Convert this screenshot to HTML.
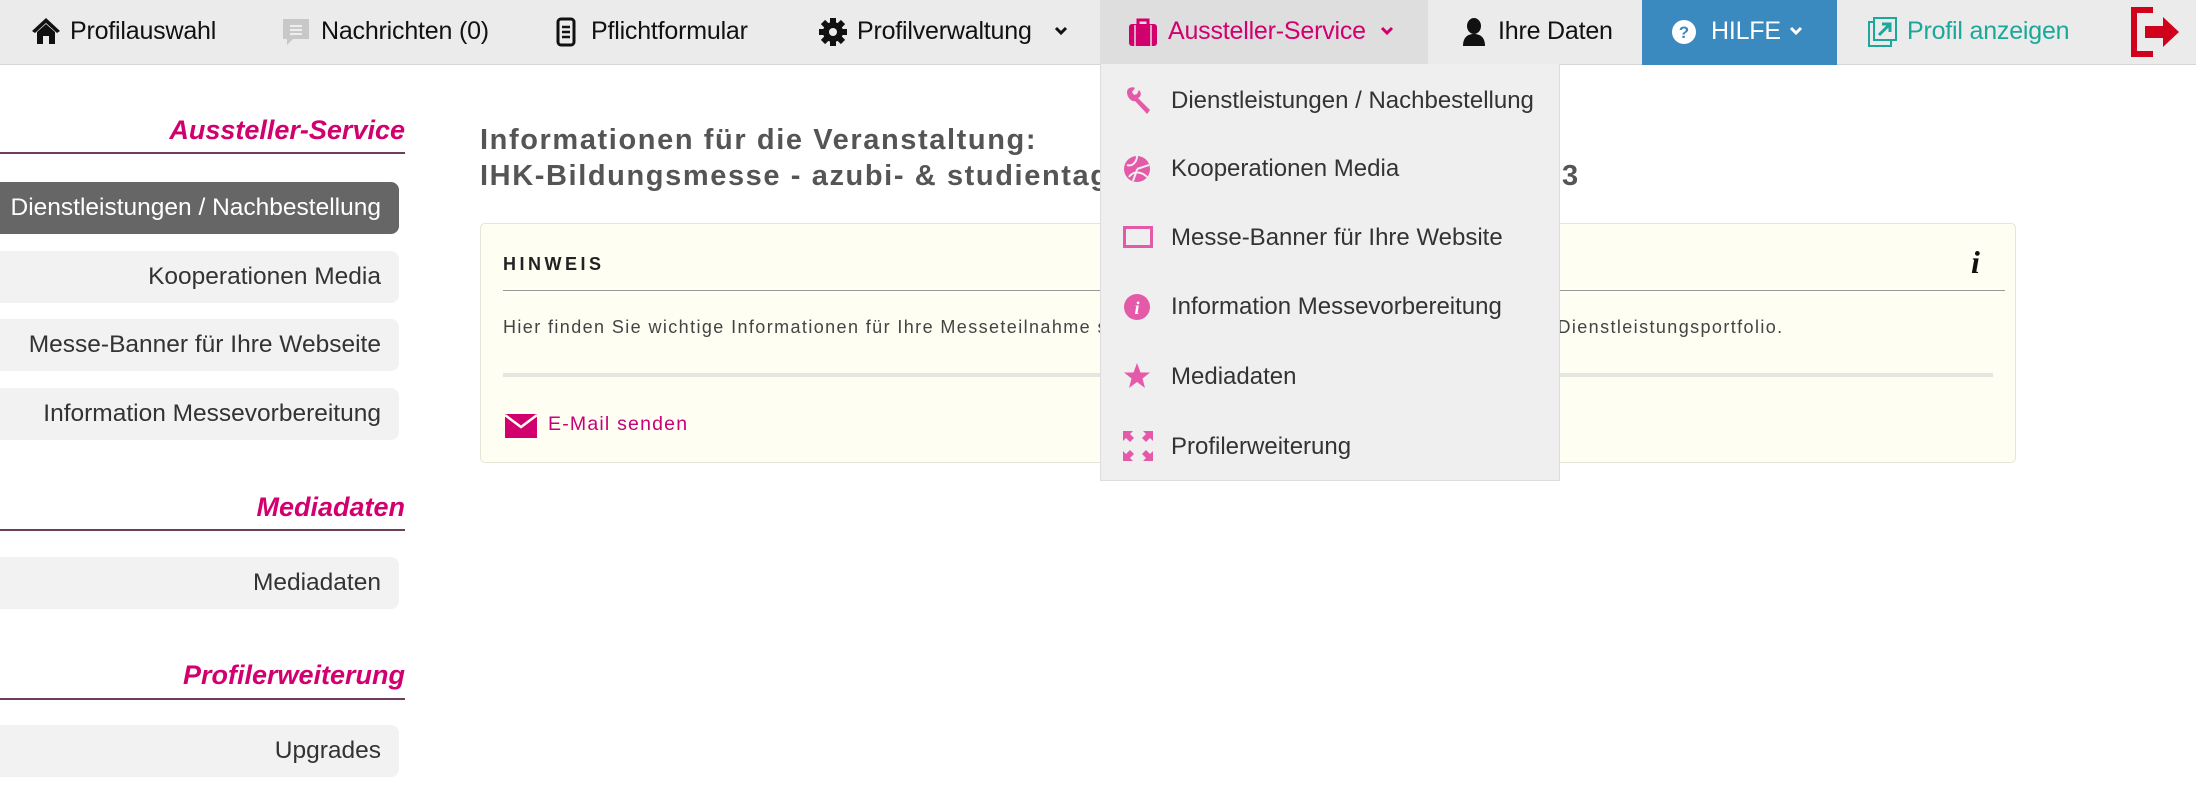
<!DOCTYPE html>
<html><head><meta charset="utf-8"><style>
*{margin:0;padding:0;box-sizing:border-box}
body{width:2196px;height:812px;overflow:hidden;background:#fff;font-family:"Liberation Sans",sans-serif;position:relative;color:#222}
.a{position:absolute;white-space:nowrap}
.nav{position:absolute;left:0;top:0;width:2196px;height:65px;background:#ebebeb;border-bottom:1px solid #d6d6d6}
.nt{position:absolute;top:16px;font-size:25px;line-height:30px;color:#111;letter-spacing:-0.2px}
.sh{position:absolute;right:1791px;font-size:27px;font-weight:bold;font-style:italic;color:#d1006e;line-height:32px}
.sl{position:absolute;left:0;width:405px;height:2px;background:#6e3c5c}
.sb{position:absolute;left:0;width:399px;height:52px;background:#f2f2f2;border-radius:0 8px 8px 0;text-align:right;padding-right:18px;font-size:24.5px;line-height:52px;color:#333}
.dd{position:absolute;left:1100px;top:64px;width:460px;height:417px;background:#efefef;border:1px solid #ddd;border-top:none}
.di{position:absolute;left:70px;font-size:24px;color:#333;line-height:30px}
.ic{position:absolute;left:22px}
</style></head><body>
<div class="nav">
 <div class="a" style="left:1100px;top:0;width:328px;height:65px;background:#dedede"></div>
 <div class="a" style="left:1642px;top:0;width:195px;height:65px;background:#3a89bf"></div>
 <svg class="a" style="left:31px;top:17px" width="30" height="28" viewBox="0 0 30 28"><path d="M15 1 L1 14 L4 16 L15 6 L26 16 L29 14Z M6 15 L15 7 L24 15 V27 H18 V19 H12 V27 H6Z" fill="#111"/></svg>
 <div class="nt" style="left:70px">Profilauswahl</div>
 <svg class="a" style="left:281px;top:17px" width="30" height="30" viewBox="0 0 30 30"><path d="M2 2 H28 V22 H12 L6 28 V22 H2Z" fill="#c8c8c8"/><path d="M9 9 H21 M9 13 H21 M9 17 H21" stroke="#eee" stroke-width="2"/></svg>
 <div class="nt" style="left:321px">Nachrichten (0)</div>
 <svg class="a" style="left:556px;top:17px" width="20" height="30" viewBox="0 0 20 30"><rect x="2" y="2" width="16" height="26" rx="3" fill="none" stroke="#111" stroke-width="3"/><path d="M6 10 H14 M6 15 H14 M6 20 H14" stroke="#111" stroke-width="2.5"/></svg>
 <div class="nt" style="left:591px">Pflichtformular</div>
 <svg class="a" style="left:818px;top:17px" width="30" height="30" viewBox="0 0 30 30"><circle cx="15" cy="15" r="10" fill="#111"/><g stroke="#111" stroke-width="6"><path d="M15 1 V29 M1 15 H29 M5 5 L25 25 M25 5 L5 25"/></g><circle cx="15" cy="15" r="4" fill="#ebebeb"/></svg>
 <div class="nt" style="left:857px">Profilverwaltung</div>
 <svg class="a" style="left:1054px;top:26px" width="14" height="10" viewBox="0 0 14 10"><path d="M2 2 L7 7 L12 2" fill="none" stroke="#111" stroke-width="3"/></svg>
 <svg class="a" style="left:1128px;top:17px" width="30" height="30" viewBox="0 0 30 30"><rect x="1" y="7" width="28" height="22" rx="3" fill="#d1006e"/><path d="M10 8 V3 H20 V8" fill="none" stroke="#d1006e" stroke-width="3"/><path d="M7 8 V29 M23 8 V29" stroke="#dedede" stroke-width="1.5"/></svg>
 <div class="nt" style="left:1168px;color:#d1006e">Aussteller-Service</div>
 <svg class="a" style="left:1380px;top:26px" width="14" height="10" viewBox="0 0 14 10"><path d="M2 2 L7 7 L12 2" fill="none" stroke="#d1006e" stroke-width="3"/></svg>
 <svg class="a" style="left:1462px;top:17px" width="24" height="30" viewBox="0 0 24 30"><ellipse cx="12" cy="9" rx="7" ry="8" fill="#111"/><path d="M1 29 C1 20 6 17 12 17 C18 17 23 20 23 29Z" fill="#111"/></svg>
 <div class="nt" style="left:1498px">Ihre Daten</div>
 <svg class="a" style="left:1671px;top:19px" width="26" height="26" viewBox="0 0 26 26"><circle cx="13" cy="13" r="12" fill="#fff"/><text x="13" y="19" font-size="17" font-weight="bold" text-anchor="middle" fill="#3a89bf" font-family="Liberation Sans">?</text></svg>
 <div class="nt" style="left:1711px;color:#fff">HILFE</div>
 <svg class="a" style="left:1789px;top:26px" width="14" height="10" viewBox="0 0 14 10"><path d="M2 2 L7 7 L12 2" fill="none" stroke="#fff" stroke-width="3"/></svg>
 <svg class="a" style="left:1868px;top:17px" width="30" height="30" viewBox="0 0 30 30"><rect x="1" y="5" width="22" height="24" fill="none" stroke="#1aa89a" stroke-width="2"/><rect x="6" y="1" width="22" height="22" fill="#ebebeb" stroke="#1aa89a" stroke-width="2"/><path d="M11 18 L22 7 M14 7 H22 V15" stroke="#1aa89a" stroke-width="3" fill="none"/></svg>
 <div class="nt" style="left:1907px;color:#1aa89a">Profil anzeigen</div>
 <svg class="a" style="left:2131px;top:7px" width="52" height="50" viewBox="0 0 52 50"><path d="M22 3 H3 V47 H22" fill="none" stroke="#d0021b" stroke-width="6"/><path d="M14 19 H32 V10 L48 25 L32 40 V31 H14Z" fill="#d0021b"/></svg>
</div>

<div class="sh" style="top:114px">Aussteller-Service</div>
<div class="sl" style="top:152px"></div>
<div class="sb" style="top:182px;background:#666;color:#fff">Dienstleistungen / Nachbestellung</div>
<div class="sb" style="top:251px">Kooperationen Media</div>
<div class="sb" style="top:319px">Messe-Banner für Ihre Webseite</div>
<div class="sb" style="top:388px">Information Messevorbereitung</div>
<div class="sh" style="top:491px">Mediadaten</div>
<div class="sl" style="top:529px"></div>
<div class="sb" style="top:557px">Mediadaten</div>
<div class="sh" style="top:659px">Profilerweiterung</div>
<div class="sl" style="top:698px"></div>
<div class="sb" style="top:725px">Upgrades</div>

<div class="a" style="left:480px;top:122px;font-size:29px;font-weight:bold;color:#555;letter-spacing:1.6px;line-height:36px">Informationen für die Veranstaltung:<br>IHK-Bildungsmesse - azubi- &amp; studientage</div>
<div class="a" style="left:1562px;top:158px;font-size:29px;font-weight:bold;color:#555;line-height:36px">3</div>

<div class="a" style="left:480px;top:223px;width:1536px;height:240px;background:#fefef3;border:1px solid #e6e6d6;border-radius:5px">
 <div class="a" style="left:22px;top:30px;font-size:18px;font-weight:bold;letter-spacing:3.5px;color:#222">HINWEIS</div>
 <div class="a" style="left:1490px;top:20px;font-size:32px;font-weight:bold;font-style:italic;font-family:'Liberation Serif',serif;color:#111">i</div>
 <div class="a" style="left:22px;top:66px;width:1502px;height:1px;background:#999"></div>
 <div class="a" style="left:22px;top:93px;font-size:18px;letter-spacing:1.4px;color:#444">Hier finden Sie wichtige Informationen für Ihre Messeteilnahme sowie einen Überblick über unser umfangreiches Dienstleistungsportfolio.</div>
 <div class="a" style="left:22px;top:149px;width:1490px;height:4px;background:#e6e6e0"></div>
 <svg class="a" style="left:24px;top:190px" width="32" height="24" viewBox="0 0 32 24"><rect x="0" y="0" width="32" height="24" fill="#d1006e"/><path d="M0 1 L16 13 L32 1" fill="none" stroke="#fefef3" stroke-width="2.5"/></svg>
 <div class="a" style="left:67px;top:189px;font-size:19.5px;letter-spacing:1.2px;color:#c8007a">E-Mail senden</div>
</div>

<div class="dd">
 <svg class="ic" style="top:22px" width="30" height="30" viewBox="0 0 30 30"><path d="M4 6 C4 2 9 0 12 2 L9 6 L11 9 L14 8 L16 4 C19 7 18 11 15 12 L27 24 L24 28 L12 15 C9 16 4 12 4 6Z" fill="#e55aa8"/></svg>
 <div class="di" style="top:22px">Dienstleistungen / Nachbestellung</div>
 <svg class="ic" style="top:91px" width="28" height="28" viewBox="0 0 28 28"><circle cx="14" cy="14" r="13" fill="#e55aa8"/><path d="M4 10 C10 12 14 6 14 1 M6 22 C10 16 18 16 24 22 M14 14 L26 10 M10 26 C12 20 14 16 14 14" stroke="#efefef" stroke-width="2" fill="none"/></svg>
 <div class="di" style="top:90px">Kooperationen Media</div>
 <svg class="ic" style="top:162px" width="30" height="22" viewBox="0 0 30 22"><rect x="1.5" y="1.5" width="27" height="19" fill="none" stroke="#e55aa8" stroke-width="3"/></svg>
 <div class="di" style="top:159px">Messe-Banner für Ihre Website</div>
 <svg class="ic" style="top:229px" width="28" height="28" viewBox="0 0 28 28"><circle cx="14" cy="14" r="13" fill="#e55aa8"/><text x="14" y="21" font-size="18" font-weight="bold" font-style="italic" text-anchor="middle" fill="#fff" font-family="Liberation Serif">i</text></svg>
 <div class="di" style="top:228px">Information Messevorbereitung</div>
 <svg class="ic" style="top:298px" width="28" height="28" viewBox="0 0 28 28"><path d="M14 1 L17.5 10.5 L27 10.5 L19.5 16.5 L22 26 L14 20 L6 26 L8.5 16.5 L1 10.5 L10.5 10.5Z" fill="#e55aa8"/></svg>
 <div class="di" style="top:298px">Mediadaten</div>
 <svg class="ic" style="top:367px" width="30" height="30" viewBox="0 0 30 30"><g fill="#e55aa8"><path d="M0 0 H10 L7 3 L11 7 L7 11 L3 7 L0 10Z"/><path d="M30 0 H20 L23 3 L19 7 L23 11 L27 7 L30 10Z"/><path d="M0 30 H10 L7 27 L11 23 L7 19 L3 23 L0 20Z"/><path d="M30 30 H20 L23 27 L19 23 L23 19 L27 23 L30 20Z"/></g></svg>
 <div class="di" style="top:368px">Profilerweiterung</div>
</div>
</body></html>
